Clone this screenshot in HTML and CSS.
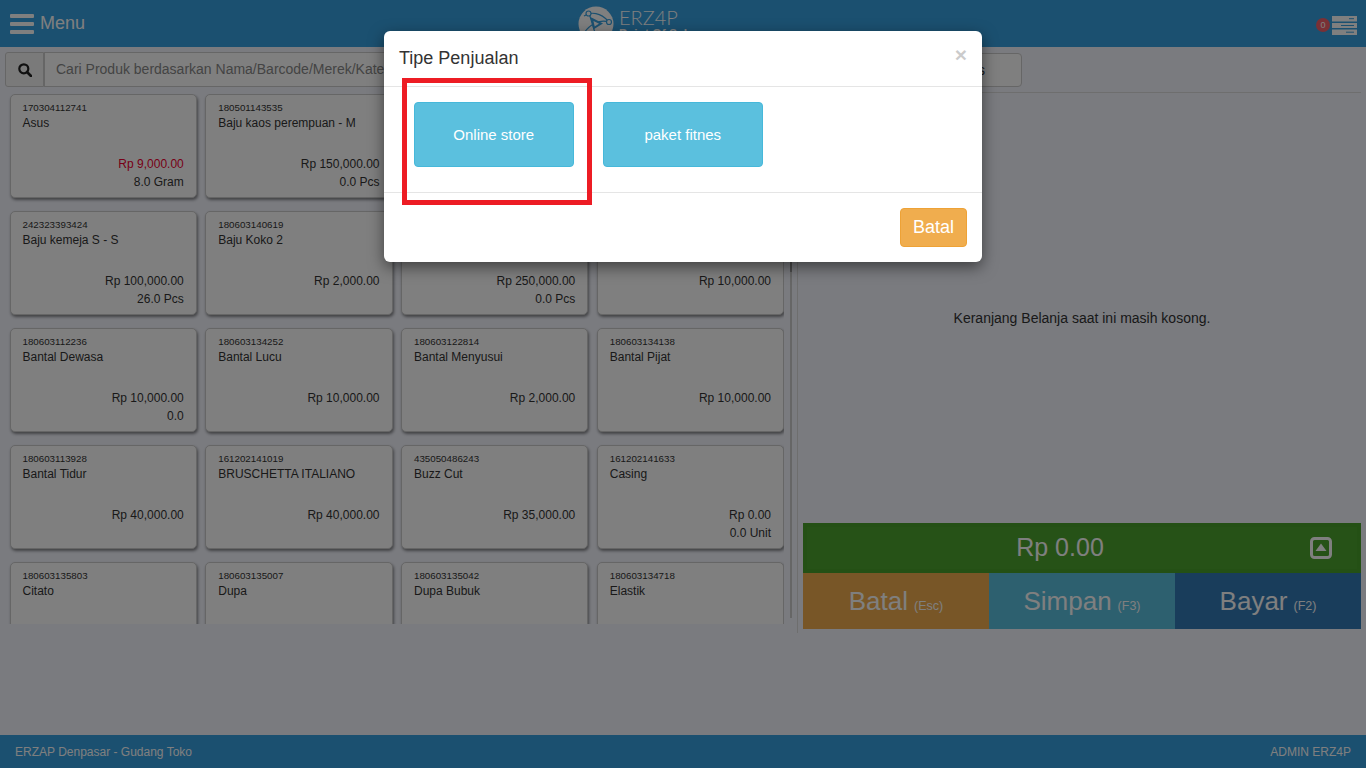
FILE: index.html
```html
<!DOCTYPE html>
<html lang="en">
<head>
  <meta charset="UTF-8">
  <meta name="viewport" content="width=device-width, initial-scale=1.0">
  <title>ERZAP POS</title>
  <link rel="stylesheet" href="styles.css">
</head>
<body>
  <header class="topbar">
    <div class="menu-toggle">
      <svg class="bars" width="24" height="20" viewBox="0 0 24 20"><rect width="24" height="4" rx="1"/><rect y="8" width="24" height="4" rx="1"/><rect y="16" width="24" height="4" rx="1"/></svg>
      <span>Menu</span>
    </div>
    <div class="logo">
      <svg width="36" height="36" viewBox="0 0 36 36">
        <circle cx="18" cy="18" r="17.5" fill="#fff"/>
        <path d="M6 10C13 5 23 7 30 15M11 7l7 23M6 27C12 18 22 13 31 16" fill="none" stroke="#37a0e0" stroke-width="1.2"/>
        <circle cx="10.500" cy="7.500" r="2.500" fill="#fff" stroke="#37a0e0" stroke-width="1.200"/>
        <circle cx="31" cy="16" r="2.500" fill="#fff" stroke="#37a0e0" stroke-width="1.200"/>
        <path d="M14 13l9 4.500-7 4.500z" fill="#fff" stroke="#37a0e0" stroke-width="2"/>
      </svg>
      <div class="logo-text">
        <span class="logo-name">ERZ4P</span>
        <span class="logo-sub">Point Of Sale</span>
      </div>
    </div>
    <div class="notif">
      <span class="badge">0</span>
      <svg width="25" height="19" viewBox="0 0 25 19">
        <rect width="25" height="5.5" fill="#fff"/><rect y="7" width="25" height="5" fill="#fff"/><rect y="13.5" width="25" height="5.5" fill="#fff"/>
        <path d="M17 2.7h5M9 9.5h13M14 16.2h8" stroke="#37a0e0" stroke-width="1"/>
      </svg>
    </div>
  </header>

  <main class="main">
    <section class="products">
      <div class="search-row">
        <div class="search-btn">
          <svg width="14" height="14" viewBox="0 0 14 14"><circle cx="5.8" cy="5.8" r="4.5" fill="none" stroke="#222" stroke-width="2.2"/><path d="M9 9l4 4" stroke="#222" stroke-width="2.6" stroke-linecap="round"/></svg>
        </div>
        <div class="search-input">Cari Produk berdasarkan Nama/Barcode/Merek/Kategori</div>
      </div>
      <div class="list-wrap">
        <div class="product-grid">
          <div class="card">
            <div class="code">170304112741</div>
            <div class="name">Asus</div>
            <div class="price low">Rp 9,000.00</div>
            <div class="qty">8.0 Gram</div>
          </div>
          <div class="card">
            <div class="code">180501143535</div>
            <div class="name">Baju kaos perempuan - M</div>
            <div class="price">Rp 150,000.00</div>
            <div class="qty">0.0 Pcs</div>
          </div>
          <div class="card"></div>
          <div class="card"></div>

          <div class="card">
            <div class="code">242323393424</div>
            <div class="name">Baju kemeja S - S</div>
            <div class="price">Rp 100,000.00</div>
            <div class="qty">26.0 Pcs</div>
          </div>
          <div class="card">
            <div class="code">180603140619</div>
            <div class="name">Baju Koko 2</div>
            <div class="price">Rp 2,000.00</div>
          </div>
          <div class="card">
            <div class="code"></div>
            <div class="name"></div>
            <div class="price">Rp 250,000.00</div>
            <div class="qty">0.0 Pcs</div>
          </div>
          <div class="card">
            <div class="code"></div>
            <div class="name"></div>
            <div class="price">Rp 10,000.00</div>
          </div>

          <div class="card">
            <div class="code">180603112236</div>
            <div class="name">Bantal Dewasa</div>
            <div class="price">Rp 10,000.00</div>
            <div class="qty">0.0</div>
          </div>
          <div class="card">
            <div class="code">180603134252</div>
            <div class="name">Bantal Lucu</div>
            <div class="price">Rp 10,000.00</div>
          </div>
          <div class="card">
            <div class="code">180603122814</div>
            <div class="name">Bantal Menyusui</div>
            <div class="price">Rp 2,000.00</div>
          </div>
          <div class="card">
            <div class="code">180603134138</div>
            <div class="name">Bantal Pijat</div>
            <div class="price">Rp 10,000.00</div>
          </div>

          <div class="card">
            <div class="code">180603113928</div>
            <div class="name">Bantal Tidur</div>
            <div class="price">Rp 40,000.00</div>
          </div>
          <div class="card">
            <div class="code">161202141019</div>
            <div class="name">BRUSCHETTA ITALIANO</div>
            <div class="price">Rp 40,000.00</div>
          </div>
          <div class="card">
            <div class="code">435050486243</div>
            <div class="name">Buzz Cut</div>
            <div class="price">Rp 35,000.00</div>
          </div>
          <div class="card">
            <div class="code">161202141633</div>
            <div class="name">Casing</div>
            <div class="price">Rp 0.00</div>
            <div class="qty">0.0 Unit</div>
          </div>

          <div class="card">
            <div class="code">180603135803</div>
            <div class="name">Citato</div>
          </div>
          <div class="card">
            <div class="code">180603135007</div>
            <div class="name">Dupa</div>
          </div>
          <div class="card">
            <div class="code">180603135042</div>
            <div class="name">Dupa Bubuk</div>
          </div>
          <div class="card">
            <div class="code">180603134718</div>
            <div class="name">Elastik</div>
          </div>
        </div>
        <div class="scrollbar"><div class="scroll-thumb"></div></div>
      </div>
    </section>

    <section class="cart">
      <div class="cart-top">
        <div class="cart-select">s</div>
      </div>
      <p class="cart-empty">Keranjang Belanja saat ini masih kosong.</p>
      <div class="total">
        <span>Rp 0.00</span>
        <svg class="total-toggle" width="22" height="22" viewBox="0 0 22 22"><rect x="1.5" y="1.5" width="19" height="19" rx="3" fill="none" stroke="#fff" stroke-width="3"/><path d="M11 6.5l5.5 7.5h-11z" fill="#fff"/></svg>
      </div>
      <div class="actions">
        <div class="action action-cancel">Batal <small>(Esc)</small></div>
        <div class="action action-save">Simpan <small>(F3)</small></div>
        <div class="action action-pay">Bayar <small>(F2)</small></div>
      </div>
    </section>
  </main>

  <footer class="footer">
    <span>ERZAP Denpasar - Gudang Toko</span>
    <span>ADMIN ERZ4P</span>
  </footer>

  <div class="backdrop"></div>

  <div class="modal">
    <div class="modal-header">
      <h4>Tipe Penjualan</h4>
      <span class="close">&times;</span>
    </div>
    <div class="modal-body">
      <button class="type-btn">Online store</button>
      <button class="type-btn">paket fitnes</button>
    </div>
    <div class="modal-footer">
      <button class="cancel-btn">Batal</button>
    </div>
    <div class="highlight"></div>
  </div>
</body>
</html>
```

FILE: styles.css
```css
* {
  box-sizing: border-box;
}
body {
  margin: 0;
  height: 100vh;
  display: flex;
  flex-direction: column;
  overflow: hidden;
  font-family: "Liberation Sans", Arial, sans-serif;
  font-size: 13px;
  color: #333;
  background-color: #f4f6fe;
}

/* top bar */
.topbar {
  height: 47px;
  flex: none;
  display: grid;
  grid-template-columns: 578px 1fr auto;
  background-color: #37a0e0;
  color: #fff;
  overflow: hidden;
}
.menu-toggle {
  display: flex;
  align-items: center;
  gap: 6px;
  padding: 0 0 0 10px;
  font-size: 18px;
}
.bars {
  fill: #fff;
}
.logo {
  display: flex;
  gap: 5px;
  padding-top: 6px;
}
.logo-text {
  display: flex;
  flex-direction: column;
}
.logo-name {
  font-family: Lato, "Liberation Sans", sans-serif;
  font-weight: 300;
  font-size: 20px;
  line-height: 22px;
}
.logo-sub {
  font-size: 12px;
  font-weight: bold;
  line-height: 12px;
}
.notif {
  display: flex;
  align-items: flex-start;
  gap: 2px;
  padding: 16px 9px 0 0;
}
.badge {
  width: 14px;
  height: 14px;
  margin-top: 2px;
  border-radius: 50%;
  background-color: #f3606a;
  font-size: 9px;
  line-height: 14px;
  text-align: center;
}

/* product list */
.main {
  flex: 1;
  display: flex;
  align-items: flex-start;
}
.products {
  width: 798px;
  height: 586px;
  flex: none;
  border-right: 1px solid #ddd;
}
.search-row {
  display: flex;
  height: 35px;
  margin: 5px 0 0 5px;
}
.search-btn {
  width: 39px;
  display: flex;
  align-items: center;
  justify-content: center;
  background-color: #f5f5f5;
  border: 1px solid #ccc;
  border-radius: 3px 0 0 3px;
}
.search-input {
  flex: 1;
  margin-right: 7px;
  padding: 8px 11px;
  background-color: #fff;
  border: 1px solid #ccc;
  font-size: 14px;
  color: #888;
  white-space: nowrap;
  overflow: hidden;
}
.list-wrap {
  display: flex;
  height: 536px;
  margin-top: 1px;
}
.product-grid {
  width: 784px;
  height: 530px;
  margin-top: 6px;
  padding-left: 9.5px;
  display: grid;
  grid-template-columns: repeat(4, 187.25px);
  grid-auto-rows: 104px;
  column-gap: 8.5px;
  row-gap: 13px;
  overflow: hidden;
}
.card {
  padding: 6px 12px 0;
  background-color: #fff;
  border: 1px solid #ccc;
  border-radius: 5px;
  box-shadow: 1px 2px 3px rgba(0, 0, 0, 0.45);
  font-size: 12px;
}
.code {
  height: 13px;
  font-size: 9.75px;
  line-height: 13px;
}
.name {
  height: 39px;
  line-height: 18px;
}
.price {
  margin-top: 2px;
  text-align: right;
  line-height: 18px;
}
.low {
  color: #f00030;
}
.qty {
  text-align: right;
  line-height: 18px;
}
.scrollbar {
  width: 2px;
  height: 530px;
  margin: 0 0 0 6px;
  background-color: #ccc;
}
.scroll-thumb {
  height: 184px;
  background-color: #999;
}

/* cart */
.cart {
  flex: 1;
  height: 582px;
  padding: 0 5px;
  display: flex;
  flex-direction: column;
}
.cart-top {
  height: 46px;
  padding-top: 6px;
  border-bottom: 1px solid #ddd;
}
.cart-select {
  width: 219px;
  height: 34px;
  padding: 8px 36px 0 0;
  background-color: #fff;
  border: 1px solid #ccc;
  border-radius: 4px;
  font-size: 14px;
  text-align: right;
}
.cart-empty {
  margin: 216px 0 0;
  text-align: center;
  font-size: 14px;
  line-height: 18px;
}
.total {
  height: 50px;
  margin-top: auto;
  padding: 0 44px 2px 0;
  display: flex;
  align-items: center;
  justify-content: center;
  background-color: #4ca42e;
  border: 4px solid #48a02a;
  color: #fff;
  font-size: 25px;
  position: relative;
}
.total-toggle {
  position: absolute;
  right: 25px;
  top: 10px;
}
.actions {
  display: flex;
  height: 56px;
}
.action {
  flex: 1;
  display: flex;
  align-items: center;
  justify-content: center;
  gap: 6px;
  color: #fff;
  font-size: 26px;
}
.action small {
  font-size: 12.5px;
  margin-top: 9px;
}
.action-cancel {
  background-color: #f0ad4e;
}
.action-save {
  background-color: #5bc0de;
}
.action-pay {
  background-color: #337ab7;
}

.footer {
  height: 33px;
  flex: none;
  display: flex;
  align-items: center;
  justify-content: space-between;
  padding: 0 15px;
  background-color: #37a0e0;
  color: #fff;
  font-size: 12px;
}

/* modal */
.backdrop {
  position: absolute;
  inset: 0;
  background-color: rgba(0, 0, 0, 0.5);
}
.modal {
  position: absolute;
  top: 31px;
  left: 384px;
  width: 598px;
  height: 231px;
  background-color: #fff;
  border-radius: 6px;
  box-shadow: 0 5px 15px rgba(0, 0, 0, 0.5);
}
.modal-header {
  height: 56px;
  padding: 15px;
  display: flex;
  justify-content: space-between;
  border-bottom: 1px solid #e5e5e5;
}
.modal-header h4 {
  margin: 0;
  font-size: 18px;
  font-weight: normal;
  line-height: 25px;
}
.close {
  font-size: 21px;
  font-weight: bold;
  line-height: 17px;
  color: #000;
  opacity: 0.2;
}
.modal-body {
  height: 105px;
  padding: 15px 30px;
  display: flex;
  gap: 29.5px;
}
.type-btn {
  width: 159.5px;
  height: 65px;
  padding: 0;
  background-color: #5bc0de;
  border: 1px solid #46b8da;
  border-radius: 4px;
  color: #fff;
  font-family: inherit;
  font-size: 15px;
}
.modal-footer {
  display: flex;
  justify-content: flex-end;
  padding: 15px;
  border-top: 1px solid #e5e5e5;
}
.cancel-btn {
  width: 67px;
  height: 39px;
  padding: 0;
  background-color: #f0ad4e;
  border: 1px solid #eea236;
  border-radius: 4px;
  color: #fff;
  font-family: inherit;
  font-size: 18px;
}
.highlight {
  position: absolute;
  top: 47px;
  left: 18px;
  width: 190px;
  height: 127px;
  border: 5px solid #ed1c24;
}
```
